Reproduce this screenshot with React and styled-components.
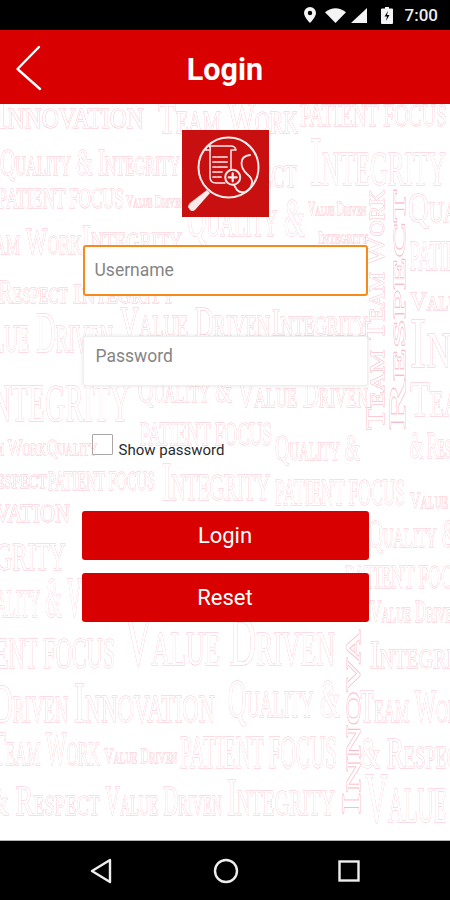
import React from 'react';
import styled, { createGlobalStyle } from 'styled-components';

const GlobalStyle = createGlobalStyle`
    html, body {
        margin: 0;
        padding: 0;
        background: #fff;
    }
    * {
        box-sizing: border-box;
    }
`;

const Screen = styled.div`
    width: 450px;
    height: 900px;
    display: flex;
    flex-direction: column;
    overflow: hidden;
    font-family: Roboto, "Liberation Sans", sans-serif;
`;

const StatusBar = styled.div`
    height: 30px;
    flex: none;
    background: #000;
    color: #ececec;
    display: flex;
    align-items: center;
    justify-content: flex-end;
    padding-right: 12px;
`;

const StatusIcon = styled.svg`
    display: block;
    flex: none;
    margin-right: ${props => props.$gap}px;
`;

const Clock = styled.span`
    font-size: 17px;
    font-weight: 500;
    line-height: 30px;
`;

const Header = styled.header`
    height: 74px;
    flex: none;
    background: #d80000;
    position: relative;
    display: flex;
    align-items: center;
    justify-content: center;
    padding-top: 5px;
`;

const BackIcon = styled.svg`
    position: absolute;
    left: 14px;
    top: 15px;
`;

const Title = styled.h1`
    margin: 0;
    color: #fff;
    font-size: 30.5px;
    font-weight: 700;
    line-height: 69px;
`;

const Main = styled.main`
    flex: 1;
    position: relative;
    background: #fff;
    overflow: hidden;
`;

const WordCloud = styled.svg`
    position: absolute;
    top: 0;
    left: 0;
    filter: blur(0.4px);
`;

const Word = styled.text`
    font-family: "Liberation Serif", serif;
    font-variant: small-caps;
    fill: #fff;
    stroke: #f9bdc9;
    stroke-width: 0.9px;
    paint-order: stroke;
`;

const Form = styled.form`
    position: relative;
    display: flex;
    flex-direction: column;
    align-items: center;
    padding-top: 26px;
`;

const Logo = styled.svg`
    display: block;
    margin-bottom: 28px;
`;

const Input = styled.input`
    display: block;
    width: 285px;
    height: ${props => props.$focused ? 51 : 50}px;
    margin-bottom: ${props => props.$gap}px;
    padding: ${props => props.$focused ? '0 10px 2px' : '0 0 10px 12px'};
    border: ${props => props.$focused ? '2.5px solid #f58a1d' : '1px solid #efefef'};
    border-radius: 3px;
    background: #fff;
    box-shadow: ${props => props.$focused ? 'none' : '0 0 4px rgba(0,0,0,0.1)'};
    font-family: inherit;
    font-size: 17.5px;
    outline: none;

    &::placeholder {
        color: #858585;
        opacity: 1;
    }
`;

const CheckRow = styled.label`
    width: 285px;
    display: flex;
    align-items: flex-start;
    padding-left: 9px;
    margin-bottom: 53px;
    color: #2b2b2b;
    font-size: 15px;
    line-height: 16px;
`;

const CheckBox = styled.span`
    width: 21px;
    height: 21px;
    flex: none;
    margin-right: 6px;
    border: 1.5px solid #aca6a8;
    border-radius: 1px;
`;

const CheckLabel = styled.span`
    margin-top: 8px;
`;

const Button = styled.button`
    display: block;
    width: 287px;
    height: 49px;
    margin-bottom: ${props => props.$gap}px;
    border: none;
    border-radius: 3px;
    background: #d80000;
    color: #fff;
    font-family: inherit;
    font-size: 22px;
    font-weight: 400;
`;

const NavBar = styled.nav`
    height: 60px;
    flex: none;
    background: #000;
    border-top: 1px solid #b5b5b5;
    display: flex;
    align-items: center;
`;

const NavIcon = styled.svg`
    display: block;
    margin-left: ${props => props.$left}px;
`;

// text, x, baseline, width, font size, rotation
const WORDS = [
    ['Innovation', -4, 128, 148, 42],
    ['Team Work', 158, 133, 140, 44],
    ['PATIENT FOCUS', 300, 126, 147, 32],
    ['Quality & Integrity', 0, 175, 180, 38],
    ['Respect', 205, 187, 92, 46],
    ['Integrity', 310, 185, 136, 70],
    ['PATIENT FOCUS', -2, 208, 126, 30],
    ['Value Driven', 126, 207, 58, 17],
    ['Quality &', 187, 236, 118, 54],
    ['Value Driven', 308, 215, 58, 18],
    ['Qua', 408, 222, 50, 42],
    ['Team Work', -30, 254, 112, 38],
    ['Integrity', 82, 250, 100, 36],
    ['Integrity', 318, 243, 50, 17],
    ['PATIENT', 410, 270, 70, 42],
    ['Respect', -2, 303, 70, 34],
    ['Integrity', 73, 303, 102, 28],
    ['Value', 410, 310, 60, 26],
    ['Value Driven', -40, 352, 153, 56],
    ['Value Driven', 120, 337, 150, 44],
    ['Integrity', 272, 335, 96, 38],
    ['Int', 410, 367, 62, 72],
    ['Integrity', -22, 421, 152, 74],
    ['Quality &', 138, 402, 94, 36],
    ['Value Driven', 238, 407, 130, 38],
    ['Team', 410, 416, 70, 50],
    ['PATIENT FOCUS', 140, 445, 132, 34],
    ['Quality &', 275, 460, 85, 36],
    ['Team Work', -30, 455, 76, 24],
    ['Quality', 47, 455, 50, 24],
    ['& Respect', 410, 458, 70, 38],
    ['Respect', -18, 488, 65, 26],
    ['PATIENT FOCUS', 48, 490, 107, 28],
    ['Integrity', 162, 500, 108, 54],
    ['PATIENT FOCUS', 275, 505, 130, 38],
    ['Value', 410, 508, 38, 24],
    ['Innovation', -60, 522, 130, 36],
    ['Integrity', -60, 570, 126, 58],
    ['Quality &', 368, 547, 90, 40],
    ['PATIENT FOCUS', 345, 588, 130, 34],
    ['Quality & V', -30, 617, 112, 56],
    ['Value Driven', 370, 622, 90, 32],
    ['PATIENT FOCUS', -50, 668, 165, 44],
    ['Value Driven', 125, 665, 210, 70],
    ['Integrity', 370, 668, 110, 40],
    ['Driven', -6, 722, 74, 54],
    ['Innovation', 74, 722, 141, 56],
    ['Quality &', 228, 717, 112, 54],
    ['Team Work', 360, 722, 110, 46],
    ['Team Work', -8, 765, 108, 48],
    ['Value Driven', 104, 763, 73, 22],
    ['PATIENT FOCUS', 180, 768, 157, 46],
    ['& Respect', 360, 768, 110, 44],
    ['& Respect', -12, 815, 112, 42],
    ['Value Driven', 105, 815, 117, 42],
    ['Integrity', 227, 815, 108, 52],
    ['Value', 365, 822, 82, 72],
    ['Team Work', 384, 340, 150, 28, -90],
    ['Respect', 405, 430, 240, 24, -90],
    ['Team', 384, 430, 80, 26, -90],
    ['Innova', 360, 815, 185, 26, -90],
];

const Cloud = () => (
    <WordCloud width="450" height="736" viewBox="0 104 450 736">
        {WORDS.map(([text, x, y, width, size, angle], i) => (
            <Word
                key={i}
                x={x}
                y={y}
                fontSize={size}
                textLength={width}
                lengthAdjust="spacingAndGlyphs"
                transform={angle ? `rotate(${angle} ${x} ${y})` : undefined}
            >
                {text}
            </Word>
        ))}
    </WordCloud>
);

const LogoMark = () => (
    <Logo width="87" height="87" viewBox="0 0 87 87">
        <rect width="87" height="87" fill="#c91010" />
        <g fill="none" stroke="#fbeaea" strokeWidth="1.5" strokeLinecap="round" strokeLinejoin="round">
            <circle cx="46.500" cy="37.500" r="30" strokeWidth="2" />
            <path d="M24 20 a3 3 0 0 1 3 -4 h22 q4 0 5 4 l-5 0 v19" />
            <path d="M24 20 h4 v27 q0 6 6 6 h9" />
            <path d="M27 16 q2 1 1 4" />
            <path d="M31 27 h14 M31 32 h14 M31 37 h14 M31 42 h9 M31 47 h8" strokeWidth="1.7" strokeDasharray="3 1.500 10" />
            <circle cx="50.700" cy="47.300" r="7.500" strokeWidth="2" />
            <path d="M50.700 43.300 v8 M46.700 47.300 h8" strokeWidth="2.2" />
            <path d="M68 25 q-8.500 1 -8.500 8 q0 6 5.500 11 q6 5 5 9" strokeWidth="1.800" />
            <path d="M70 53 q-1 7 -7 9 q-5 1 -8 -2 l-3 -5" strokeWidth="1.800" />
        </g>
        <path d="M8 73 L25 60 L28 63 L13 80 Q10 82 8 80 L6 77 Q6 75 8 73 Z" fill="#fbeaea" />
    </Logo>
);

const App = () => (
    <Screen>
        <GlobalStyle />
        <StatusBar>
            <StatusIcon $gap={9} width="12" height="16" viewBox="0 0 12 16">
                <path fillRule="evenodd" d="M6 0a6 6 0 0 0-6 6c0 4 6 10 6 10s6-6 6-10a6 6 0 0 0-6-6zm0 3.800a2.200 2.200 0 1 1 0 4.400 2.200 2.200 0 0 1 0-4.400z" fill="#f4f4f4" />
            </StatusIcon>
            <StatusIcon $gap={5} width="21" height="15" viewBox="0 0 21 15">
                <path d="M10.500 15 L0 4.200 Q10.500 -3.500 21 4.200 Z" fill="#f4f4f4" />
            </StatusIcon>
            <StatusIcon $gap={14} width="16" height="15" viewBox="0 0 16 15">
                <path d="M0 15 L16 0 V15 Z" fill="#f4f4f4" />
            </StatusIcon>
            <StatusIcon $gap={12} width="12" height="17" viewBox="0 0 12 17">
                <path fillRule="evenodd" d="M4 0h4v1.500h3a1 1 0 0 1 1 1V16a1 1 0 0 1-1 1H1a1 1 0 0 1-1-1V2.500a1 1 0 0 1 1-1h3zM7 4L3.500 9.500H6L5 14l3.500-6H6z" fill="#f4f4f4" />
            </StatusIcon>
            <Clock>7:00</Clock>
        </StatusBar>
        <Header>
            <BackIcon width="30" height="46" viewBox="0 0 30 46">
                <path d="M25 2 L3.500 24 L26 44" fill="none" stroke="#fff" strokeWidth="2.4" strokeLinecap="round" strokeLinejoin="round" />
            </BackIcon>
            <Title>Login</Title>
        </Header>
        <Main>
            <Cloud />
            <Form>
                <LogoMark />
                <Input $focused $gap={40} placeholder="Username" />
                <Input $gap={48} placeholder="Password" />
                <CheckRow>
                    <CheckBox />
                    <CheckLabel>Show password</CheckLabel>
                </CheckRow>
                <Button type="button" $gap={13}>Login</Button>
                <Button type="button" $gap={0}>Reset</Button>
            </Form>
        </Main>
        <NavBar>
            <NavIcon $left={90} width="22" height="26" viewBox="0 0 22 26">
                <path d="M20 2 L2 13 L20 24 Z" fill="none" stroke="#eee" strokeWidth="2.400" strokeLinejoin="round" />
            </NavIcon>
            <NavIcon $left={101} width="26" height="26" viewBox="0 0 26 26">
                <circle cx="13" cy="13" r="11" fill="none" stroke="#eee" strokeWidth="2.400" />
            </NavIcon>
            <NavIcon $left={99} width="22" height="22" viewBox="0 0 22 22">
                <rect x="1.500" y="1.500" width="19" height="19" fill="none" stroke="#eee" strokeWidth="2.400" />
            </NavIcon>
        </NavBar>
    </Screen>
);

export default App;
